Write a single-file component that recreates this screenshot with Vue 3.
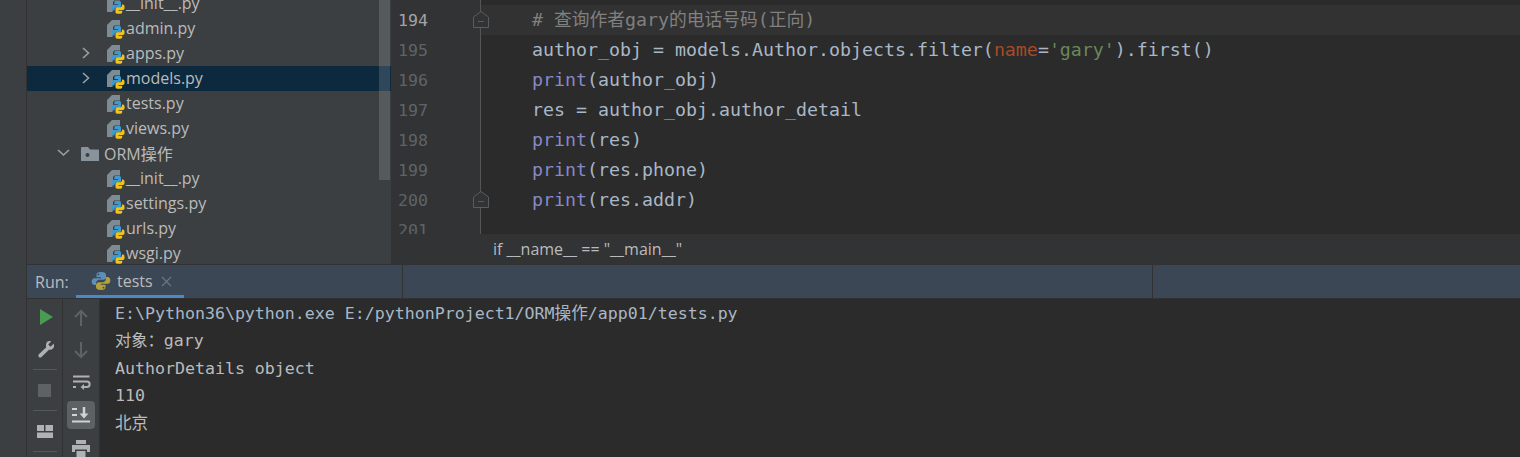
<script setup>
const files = [
  { name: '__init__.py' },
  { name: 'admin.py' },
  { name: 'apps.py', arrow: true },
  { name: 'models.py', arrow: true, selected: true },
  { name: 'tests.py' },
  { name: 'views.py' },
  { name: 'ORM操作', folder: true },
  { name: '__init__.py' },
  { name: 'settings.py' },
  { name: 'urls.py' },
  { name: 'wsgi.py' },
]
const lineNumbers = [194, 195, 196, 197, 198, 199, 200, 201]
</script>

<template>
  <div class="app">
    <div class="stripe"></div>
    <div class="main">
      <div class="top">
        <aside class="tree">
          <div class="tree-list">
            <div v-for="(f, i) in files" :key="i" class="row" :class="{ selected: f.selected }">
              <svg v-if="f.arrow" class="chev" width="10" height="14" viewBox="0 0 10 14"><path d="M2 2l5.500 5-5.500 5" fill="none" stroke="#9da0a2" stroke-width="1.600"/></svg>
              <svg v-if="f.folder" class="chev-down" width="14" height="10" viewBox="0 0 14 10"><path d="M2 2l5.500 5 5.500-5" fill="none" stroke="#9da0a2" stroke-width="1.600"/></svg>
              <svg v-if="f.folder" class="folder" width="18" height="14" viewBox="0 0 18 14"><path d="M0 1a1 1 0 0 1 1-1h6l2 2.500h8a1 1 0 0 1 1 1V14H0z" fill="#88949c"/><circle cx="6.500" cy="8" r="2" fill="#3c3f41"/></svg>
              <svg v-if="!f.folder" class="py" width="18" height="19" viewBox="0 0 18 19">
                <path d="M0 5l5-5h8v5.500H7.500L6 7v6.500l-.5 3.500H0z" fill="#7f8b93"/>
                <path d="M9 6h3.200c1 0 1.800.7 1.800 1.700v3c0 1-.8 1.800-1.800 1.800H9.500c-1.100 0-2 .8-2 1.900v1H6.700C5.700 15.400 5 14.600 5 13.400v-1.900c0-1 .7-1.700 1.700-1.700h4.300v-.8H7.300V7.600C7.300 6.600 8 6 9 6z" fill="#3d9ad1"/>
                <path d="M15 9.500h.8c1 0 1.700.8 1.700 1.900v1.900c0 1-.7 1.700-1.700 1.700h-4.300v.8h3.700v1.300c0 1-.7 1.600-1.700 1.600h-3.200c-1 0-1.800-.7-1.800-1.700v-2.900c0-1 .8-1.800 1.800-1.800H13c1.100 0 2-.8 2-1.900z" fill="#f2c318"/>
              </svg>
              <span class="label">{{ f.name }}</span>
            </div>
          </div>
          <div class="tree-thumb"></div>
        </aside>

        <section class="editor">
          <div class="editor-body">
            <div class="gutter">
              <div v-for="n in lineNumbers" :key="n" class="ln" :class="{ current: n === 194 }">{{ n }}</div>
              <svg class="fold fold-a" width="16" height="17" viewBox="0 0 16 17"><path d="M.5 16.500V6L8 .5 15.500 6v10.500z" fill="#313335" stroke="#5a5d5f"/><path d="M5 10.500h6" stroke="#5a5d5f"/></svg>
              <svg class="fold fold-b" width="16" height="17" viewBox="0 0 16 17"><path d="M.5 16.500V6L8 .5 15.500 6v10.500z" fill="#313335" stroke="#5a5d5f"/><path d="M5 10.500h6" stroke="#5a5d5f"/></svg>
            </div>
            <div class="code">
              <div class="line current-line"><span class="comment"># <span class="zh">查询作者</span>gary<span class="zh">的电话号码</span>(<span class="zh">正向</span>)</span></div>
              <div class="line">author_obj = models.Author.objects.filter(<span class="param">name</span>=<span class="str">'gary'</span>).first()</div>
              <div class="line"><span class="builtin">print</span>(author_obj)</div>
              <div class="line">res = author_obj.author_detail</div>
              <div class="line"><span class="builtin">print</span>(res)</div>
              <div class="line"><span class="builtin">print</span>(res.phone)</div>
              <div class="line"><span class="builtin">print</span>(res.addr)</div>
              <div class="line"></div>
            </div>
          </div>
          <div class="crumb">if __name__ == "__main__"</div>
        </section>
      </div>

      <div class="runbar">
        <span class="run-label">Run:</span>
        <div class="run-tab">
          <svg width="20" height="20" viewBox="0 0 20 20">
            <path d="M9.800 1C6.500 1 5.500 2.300 5.500 4v2.300h4.700v.9H3.600C1.800 7.200.7 8.500.7 10.600c0 2.200 1 3.500 2.800 3.500h1.700v-2.400c0-1.600 1.400-3 3-3h4.300c1.400 0 2.500-1.100 2.500-2.500V4c0-1.700-1.500-3-4.600-3zM7.500 2.500a.9.9 0 1 1 0 1.800.9.9 0 0 1 0-1.800z" fill="#5d8fb8"/>
            <path d="M10.200 19c3.300 0 4.300-1.300 4.300-3v-2.300H9.800v-.9h6.600c1.800 0 2.900-1.300 2.900-3.400 0-2.200-1-3.500-2.800-3.500h-1.700v2.400c0 1.600-1.400 3-3 3H7.500C6.100 11.800 5 12.900 5 14.300V16c0 1.700 1.500 3 5.200 3zm2.300-1.500a.9.9 0 1 1 0-1.800.9.9 0 0 1 0 1.800z" fill="#b3a13c"/>
          </svg>
          <span class="tab-name">tests</span>
          <svg class="tab-close" width="11" height="11" viewBox="0 0 12 12"><path d="M1 1l10 10M11 1L1 11" stroke="#737b85" stroke-width="1.300"/></svg>
        </div>
        <i class="sep sep-a"></i>
        <i class="sep sep-b"></i>
      </div>

      <div class="bottom">
        <div class="tools tools-a">
          <svg class="t t-play" width="13" height="16" viewBox="0 0 13 16"><path d="M0 0l13 8-13 8z" fill="#499c54"/></svg>
          <svg class="t t-wrench" width="18" height="18" viewBox="0 0 20 20"><path d="M13.500 1c1 0 1.800.2 2.300.5L12.500 5l2.500 2.500 3.500-3.300c.4.800.5 1.500.5 2.300 0 3-2.700 5.100-5.700 4.200L5 18.800c-.9.800-2.100.8-2.900 0-.8-.8-.8-2 0-2.900l8.200-7.800C9.400 4.600 10.700 1 13.500 1z" fill="#afb1b3"/></svg>
          <hr class="tsep tsep-a" />
          <span class="stop"></span>
          <hr class="tsep tsep-b" />
          <svg class="t t-layout" width="16" height="13" viewBox="0 0 16 13"><path d="M0 0h7v6H0zM8.500 0H16v6H8.500zM0 7.500h16V13H0z" fill="#afb1b3"/></svg>
          <hr class="tsep tsep-c" />
        </div>
        <div class="tools tools-b">
          <svg class="t t-up" width="16" height="18" viewBox="0 0 16 18"><path d="M8 17V2M2 8l6-6 6 6" fill="none" stroke="#5f6264" stroke-width="2"/></svg>
          <svg class="t t-down" width="16" height="18" viewBox="0 0 16 18"><path d="M8 1v15M2 10l6 6 6-6" fill="none" stroke="#5f6264" stroke-width="2"/></svg>
          <svg class="t t-wrap" width="18" height="16" viewBox="0 0 18 16"><path d="M0 1.500h16.500M0 6.500h14c3.500 0 3.500 5.500 0 5.500H9" fill="none" stroke="#afb1b3" stroke-width="2"/><path d="M11 9l-3.500 3 3.500 3z" fill="#afb1b3"/><path d="M0 12h3" stroke="#afb1b3" stroke-width="2"/></svg>
          <div class="scroll-btn">
            <svg width="18" height="16" viewBox="0 0 18 16"><path d="M0 2h5M0 8h5M0 14.500h18" stroke="#d0d2d3" stroke-width="2"/><path d="M12 0v8" stroke="#d0d2d3" stroke-width="2.500"/><path d="M7.500 6.500h9L12 11.500z" fill="#d0d2d3"/></svg>
          </div>
          <svg class="t t-print" width="18" height="18" viewBox="0 0 18 18"><path d="M4 0h10v4H4zM0 5h18v7h-3V9.500H3V12H0zM4.500 11h9v7h-9z" fill="#afb1b3"/></svg>
        </div>
        <div class="console">
          <div class="out cmd">E:\Python36\python.exe E:/pythonProject1/ORM操作/app01/tests.py</div>
          <div class="out"><span class="cz">对象：</span>gary</div>
          <div class="out">AuthorDetails object</div>
          <div class="out">110</div>
          <div class="out">北京</div>
        </div>
      </div>
    </div>
  </div>
</template>

<style>
html, body { margin: 0; background: #2b2b2b; }
</style>

<style scoped>
.app {
  width: 1520px;
  height: 457px;
  display: flex;
  overflow: hidden;
  background: #2b2b2b;
}
.stripe {
  width: 26px;
  flex: none;
  background: #3c3f41;
  border-right: 1px solid #323232;
}
.main {
  flex: 1;
  min-width: 0;
  display: flex;
  flex-direction: column;
}
.top {
  height: 264px;
  flex: none;
  display: flex;
  border-bottom: 1px solid #323232;
}
.tree {
  position: relative;
  width: 364px;
  flex: none;
  background: #3c3f41;
  overflow: hidden;
}
.tree-list { margin-top: -9px; }
.row {
  position: relative;
  height: 25px;
  display: flex;
  align-items: center;
  padding-left: 80px;
  font: 16px "Open Sans", "Noto Sans CJK SC", sans-serif;
  color: #bbbbbb;
}
.row.selected { background: #0d293e; }
.label { padding-bottom: 1px; }
.chev { position: absolute; left: 54px; top: 5px; }
.chev-down { position: absolute; left: 29px; top: 7px; }
.folder { margin-left: -26px; margin-right: 5px; }
.py { margin: 1px 1px 0 0; flex: none; }
.tree-thumb {
  position: absolute;
  right: 1px;
  top: 0;
  width: 11px;
  height: 180px;
  background: rgba(255, 255, 255, 0.14);
}
.editor {
  flex: 1;
  min-width: 0;
  display: flex;
  flex-direction: column;
}
.editor-body {
  height: 235px;
  flex: none;
  display: flex;
  overflow: hidden;
  border-bottom: 1px solid #323232;
  box-sizing: border-box;
}
.gutter {
  position: relative;
  width: 90px;
  flex: none;
  box-sizing: border-box;
  background: #313335;
  border-right: 1px solid #555555;
  padding-top: 6px;
}
.ln {
  height: 30px;
  width: 37px;
  text-align: right;
  font: 16.600px/30px "DejaVu Sans Mono", monospace;
  color: #606366;
}
.ln.current { color: #a4a3a3; }
.fold { position: absolute; left: 82px; }
.fold-a { top: 11px; }
.fold-b { top: 191px; }
.code {
  flex: 1;
  padding-top: 5px;
  min-width: 0;
}
.line {
  height: 30px;
  line-height: 30px;
  padding-left: 51px;
  font-family: "DejaVu Sans Mono", "Noto Sans CJK SC", monospace;
  font-size: 18.270px;
  color: #a9b7c6;
  white-space: pre;
}
.current-line { background: #323232; }
.comment { color: #808080; }
.zh { font-size: 17.750px; line-height: 0; font-family: "Noto Sans CJK SC", sans-serif; }
.param { color: #aa4926; }
.str { color: #6a8759; }
.builtin { color: #8888c6; }
.crumb {
  flex: 1;
  display: flex;
  align-items: center;
  padding: 0 0 2px 102px;
  background: #313335;
  font: 16px "Open Sans", sans-serif;
  color: #bbbbbb;
  white-space: pre;
}
.runbar {
  position: relative;
  height: 33px;
  flex: none;
  display: flex;
  align-items: center;
  background: #3c4755;
  border-bottom: 1px solid #323232;
}
.run-label {
  margin: 1px 0 0 8px;
  width: 41px;
  font: 16px "Open Sans", sans-serif;
  color: #bbbbbb;
}
.run-tab {
  position: relative;
  width: 108px;
  height: 33px;
  box-sizing: border-box;
  display: flex;
  align-items: center;
  padding: 2px 0 0 15px;
  gap: 6px;
  border-bottom: 3px solid #4a88c7;
  font: 16px "Open Sans", sans-serif;
  color: #bbbbbb;
}
.tab-close { margin-left: 2px; }
.sep { position: absolute; top: 0; bottom: 0; width: 1px; background: #323232; }
.sep-a { left: 375px; }
.sep-b { left: 1125px; }
.bottom {
  flex: 1;
  min-height: 0;
  display: flex;
}
.tools {
  position: relative;
  flex: none;
  background: #3c3f41;
  border-right: 1px solid #323232;
}
.tools-a { width: 35px; }
.tools-b { width: 36px; }
.t { position: absolute; }
.t-play { left: 13px; top: 10px; }
.t-wrench { left: 10px; top: 41px; }
.stop { position: absolute; left: 11px; top: 85px; width: 13px; height: 13px; background: #5f6264; }
.tsep { position: absolute; left: 6px; width: 24px; height: 1px; margin: 0; border: 0; background: #55585a; }
.tsep-a { top: 70px; }
.tsep-b { top: 111px; }
.tsep-c { top: 152px; }
.t-layout { left: 10px; top: 126px; }
.t-up { left: 10px; top: 10px; }
.t-down { left: 10px; top: 42px; }
.t-wrap { left: 10px; top: 76px; }
.scroll-btn {
  position: absolute;
  left: 4px;
  top: 102px;
  width: 28px;
  height: 28px;
  border-radius: 4px;
  background: #5c6164;
  display: flex;
  align-items: center;
  justify-content: center;
}
.t-print { left: 9px; top: 141px; }
.console {
  flex: 1;
  min-width: 0;
  padding: 1px 0 0 15px;
  font-family: "DejaVu Sans Mono", "Noto Sans CJK SC", monospace;
  font-size: 16.600px;
  color: #bbbbbb;
}
.out { height: 27.400px; line-height: 27.400px; white-space: pre; }
.cmd { color: #a9b7c6; }
.cz { font-size: 16.300px; }
</style>
